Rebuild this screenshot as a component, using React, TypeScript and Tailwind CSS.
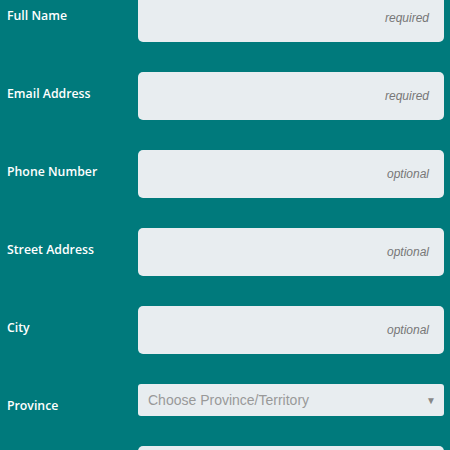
const fields = [
  { label: "Full Name", hint: "required" },
  { label: "Email Address", hint: "required" },
  { label: "Phone Number", hint: "optional" },
  { label: "Street Address", hint: "optional" },
  { label: "City", hint: "optional" },
];

const labelCls =
  "w-[138px] shrink-0 pl-[7px] pt-[12px] text-[12.3px] leading-[20px] font-semibold text-white [font-family:'Open_Sans',sans-serif]";

function FieldRow({ label, hint }: { label: string; hint: string }) {
  return (
    <div className="flex">
      <label className={labelCls}>{label}</label>
      <div className="flex h-[48px] w-[306px] items-center justify-end rounded-[5px] bg-[#e8edf0] pr-[15px]">
        <span className="text-[12px] italic text-[#777] [font-family:'Liberation_Sans',Arial,sans-serif]">
          {hint}
        </span>
      </div>
    </div>
  );
}

export default function App() {
  return (
    <div className="h-[450px] w-[450px] overflow-hidden bg-[#007a7c]">
      <div className="-mt-[6px] flex flex-col gap-[30px]">
        {fields.map((f) => (
          <FieldRow key={f.label} label={f.label} hint={f.hint} />
        ))}
        <div className="flex">
          <label className={labelCls}>Province</label>
          <div className="flex h-[32px] w-[306px] items-center justify-between rounded-[3px] bg-[#e8edf0] pl-[10px] pr-[8px] [font-family:'Liberation_Sans',Arial,sans-serif]">
            <span className="text-[14px] text-[#999]">Choose Province/Territory</span>
            <span className="text-[10px] text-[#888]">▼</span>
          </div>
        </div>
        <div className="flex">
          <div className="w-[138px] shrink-0" />
          <div className="h-[48px] w-[306px] rounded-[5px] bg-[#e8edf0]" />
        </div>
      </div>
    </div>
  );
}
